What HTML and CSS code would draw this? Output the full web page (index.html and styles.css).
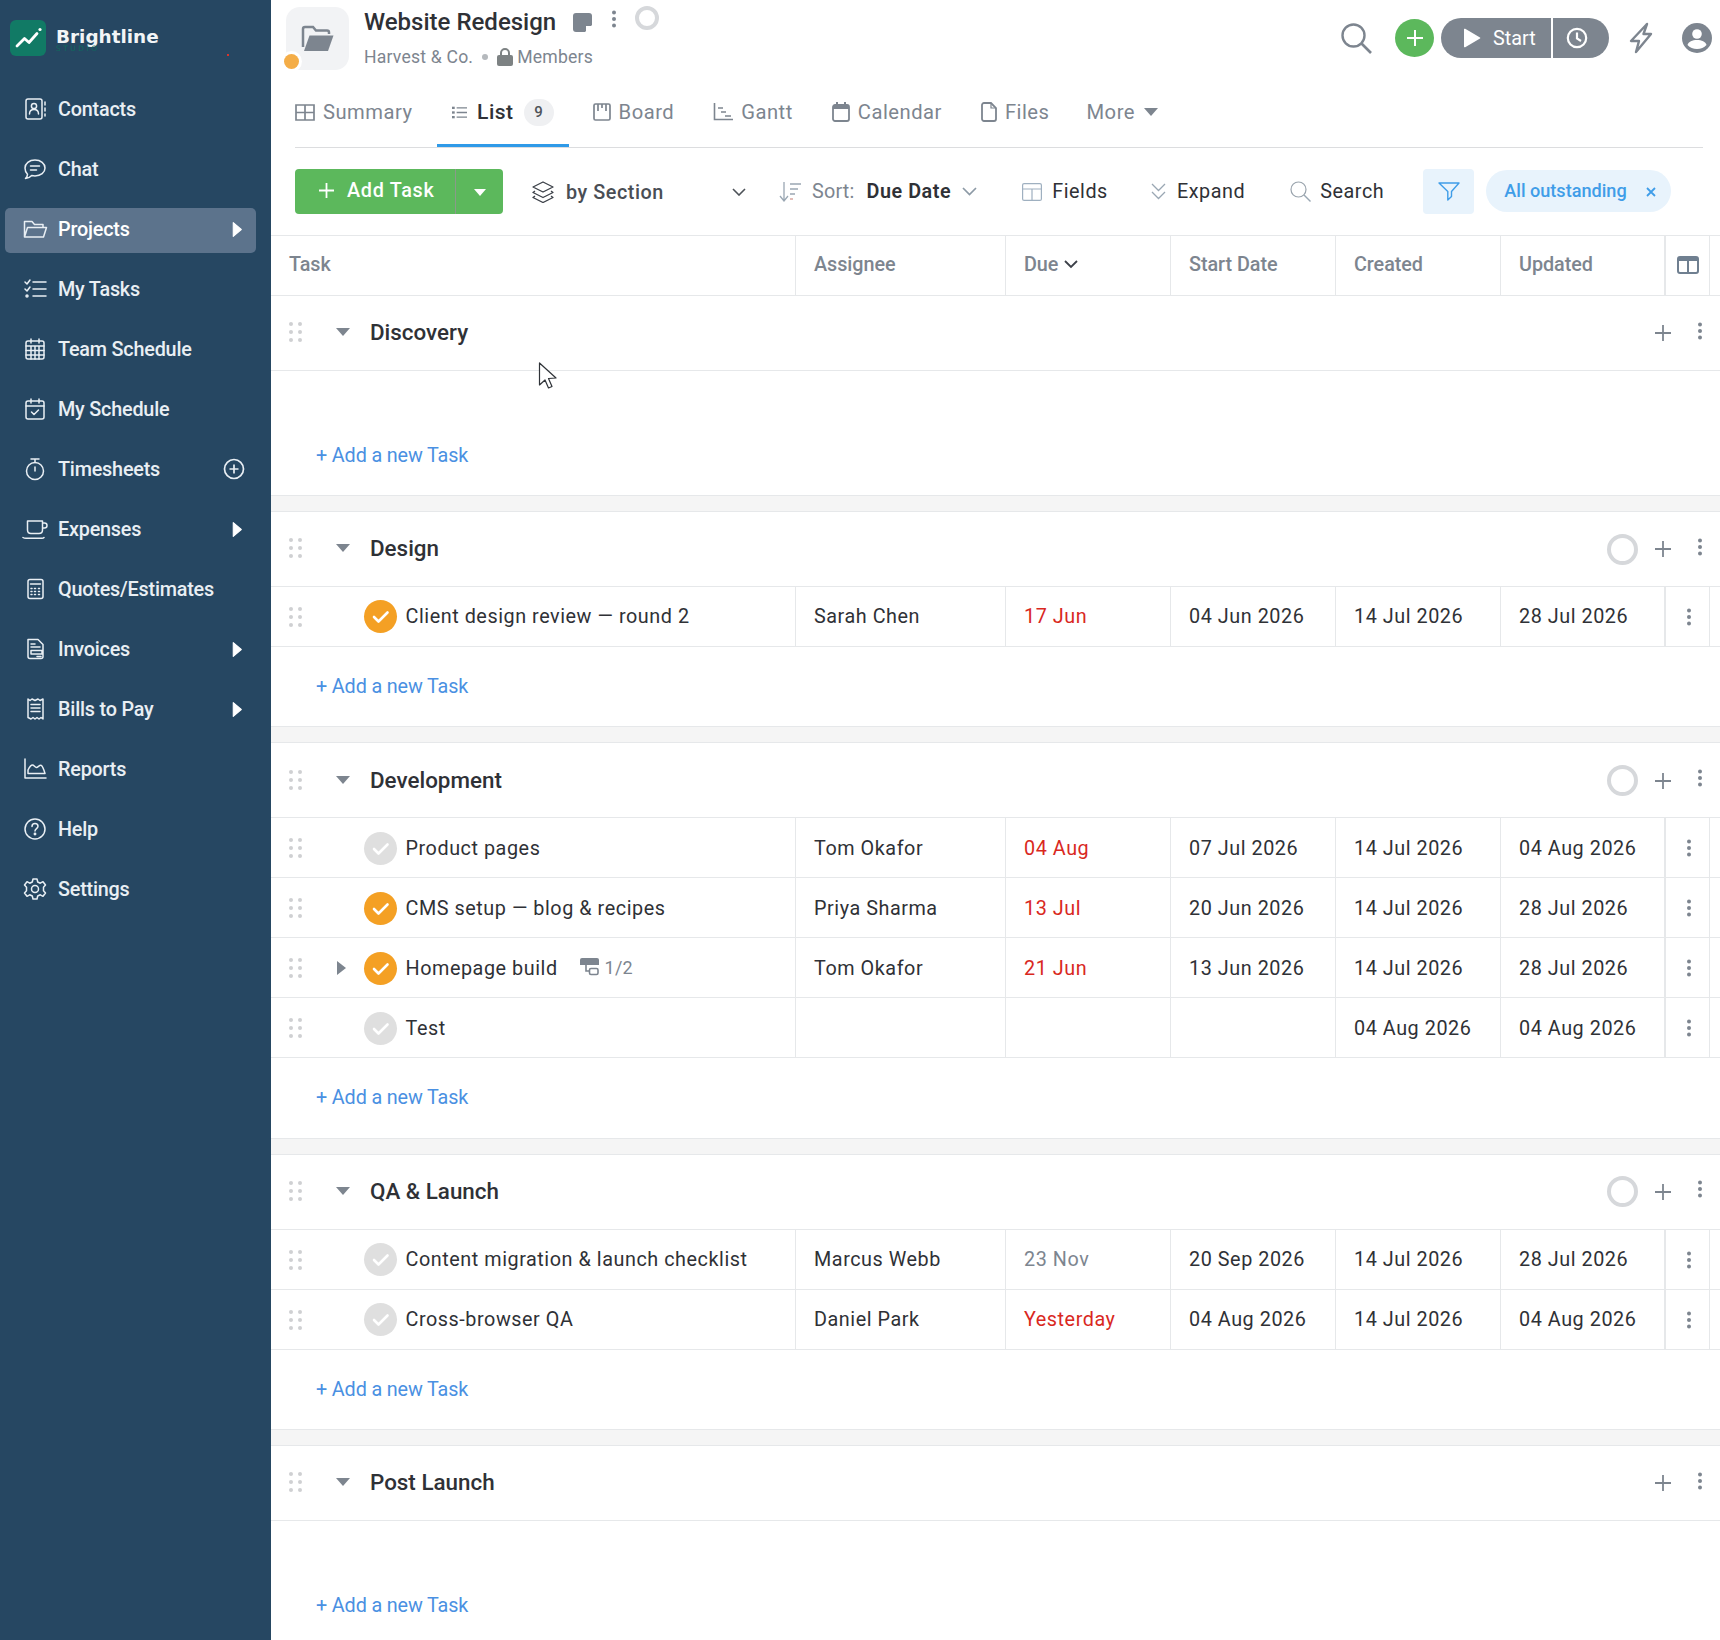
FILE: index.html
```html
<!DOCTYPE html>
<html lang="en">
<head>
<meta charset="utf-8">
<title>Website Redesign</title>
<link rel="stylesheet" href="styles.css">
</head>
<body>
<svg class="defs" width="0" height="0" aria-hidden="true">
  <symbol id="i-drag" viewBox="0 0 13 20"><g fill="#cfd0d2"><circle cx="2" cy="2" r="2"/><circle cx="11" cy="2" r="2"/><circle cx="2" cy="10" r="2"/><circle cx="11" cy="10" r="2"/><circle cx="2" cy="18" r="2"/><circle cx="11" cy="18" r="2"/></g></symbol>
  <symbol id="i-caret" viewBox="0 0 14 8"><path d="M0 0h14L7 8z" fill="#7d858f"/></symbol>
  <symbol id="i-check" viewBox="0 0 33 33"><path d="M10 17l4.5 4.5L23.5 12.500" fill="none" stroke="#fff" stroke-width="2.600" stroke-linecap="round" stroke-linejoin="round"/></symbol>
  <symbol id="i-plus" viewBox="0 0 18 18"><path d="M9 1v16M1 9h16" fill="none" stroke="#7d858f" stroke-width="1.800"/></symbol>
  <symbol id="i-dots" viewBox="0 0 6 18"><g fill="#7d858f"><circle cx="3" cy="2.500" r="2"/><circle cx="3" cy="9" r="2"/><circle cx="3" cy="15.500" r="2"/></g></symbol>
  <symbol id="i-arrow" viewBox="0 0 9 14"><path d="M1 0.500l7.500 6.500L1 13.500z" fill="#fff" stroke="#fff" stroke-linejoin="round"/></symbol>
</svg>

<div class="app">
  <aside class="sidebar">
    <div class="brand">
      <span class="brand-logo">
        <svg width="36" height="36" viewBox="0 0 36 36"><path d="M7 26l7.500-7.500 4.500 4 8-9" fill="none" stroke="#fff" stroke-width="2.800" stroke-linecap="round" stroke-linejoin="round"/><circle cx="30" cy="9.500" r="1.600" fill="#fff"/></svg>
      </span>
      <span class="brand-text">Brightline<small>STUDIO</small></span>
      <i class="red-speck"></i>
    </div>
    <nav class="nav">
      <a class="nav-item"><svg class="nav-icon" viewBox="0 0 26 26"><rect x="4" y="3" width="16" height="20" rx="2"/><circle cx="12" cy="10" r="2.600"/><path d="M7.500 18c0-3 2-4.500 4.500-4.500s4.500 1.500 4.500 4.500M23 6v3M23 12v3M23 18v2"/></svg>Contacts</a>
      <a class="nav-item"><svg class="nav-icon" viewBox="0 0 26 26"><path d="M13 4c5.800 0 10 3.500 10 8s-4.200 8-10 8c-1.200 0-2.300-.2-3.300-.4C8 21.500 6 22.500 3.500 22.500c1.300-1.200 2-2.600 2-4.300C3.900 16.700 3 14.500 3 12c0-4.500 4.200-8 10-8zM8.500 10h9M8.500 14h6"/></svg>Chat</a>
      <a class="nav-item active"><svg class="nav-icon" viewBox="0 0 26 26"><path d="M2.500 21V5.500h7.500l2.500 3H21v3M2.500 21l3-9.500h19L21.500 21z"/></svg>Projects<svg class="nav-arrow"><use href="#i-arrow"/></svg></a>
      <a class="nav-item"><svg class="nav-icon" viewBox="0 0 26 26"><path d="M3 6l2 2 3-4M3 13l2 2 3-4M11 6h13M11 13h13M11 20h13"/><circle cx="5" cy="20" r="1"/></svg>My Tasks</a>
      <a class="nav-item"><svg class="nav-icon" viewBox="0 0 26 26"><rect x="4" y="5" width="18" height="18" rx="2"/><path d="M4 10h18M4 14.500h18M4 19h18M9 10v13M13 10v13M17 10v13M9 3v4M17 3v4"/></svg>Team Schedule</a>
      <a class="nav-item"><svg class="nav-icon" viewBox="0 0 26 26"><rect x="4" y="5" width="18" height="18" rx="2"/><path d="M4 10h18M9 3v4M17 3v4M9.500 16l2.500 2.500 4.500-4.500"/></svg>My Schedule</a>
      <a class="nav-item"><svg class="nav-icon" viewBox="0 0 26 26"><circle cx="13" cy="15" r="8.500"/><path d="M9 3h8M13 3v3.500M13 11v4"/></svg>Timesheets<svg class="nav-plus" viewBox="0 0 22 22"><circle cx="11" cy="11" r="9.500"/><path d="M11 6.500v9M6.500 11h9"/></svg></a>
      <a class="nav-item"><svg class="nav-icon" viewBox="0 0 26 26"><path d="M5.500 5h15v9c0 2-1.500 3.500-3.500 3.500H9c-2 0-3.500-1.500-3.500-3.500zM20.500 7h2c1.500 0 2.500 1 2.500 2.500S24 12 22.500 12h-2M1 21.500c1 .7 2 .8 3 .8h16c1 0 1.500-.2 2-.8"/></svg>Expenses<svg class="nav-arrow"><use href="#i-arrow"/></svg></a>
      <a class="nav-item"><svg class="nav-icon" viewBox="0 0 26 26"><rect x="6" y="3.500" width="15" height="19" rx="2"/><path d="M8.500 8h10M9 12.500h1M12.500 12.500h1M16.500 12.500h1M9 15.500h1M12.500 15.500h1M16.500 15.500h1M9 18.500h1M12.500 18.500h1M16.500 18.500h1"/></svg>Quotes/Estimates</a>
      <a class="nav-item"><svg class="nav-icon" viewBox="0 0 26 26"><path d="M6 3.500h10l5 5v12c0 1-.8 2-2 2H8c-1.200 0-2-1-2-2zM9 8h4M9 11h9M9 14.500h11v3.500H9zM15 20.500h4"/></svg>Invoices<svg class="nav-arrow"><use href="#i-arrow"/></svg></a>
      <a class="nav-item"><svg class="nav-icon" viewBox="0 0 26 26"><path d="M6 3l2 1.500L10 3l3 1.500L16 3l2 1.500L21 3v20l-2-1.500-2 1.500-2-1.500-2 1.500-2-1.500-2 1.500-3-1.500zM9 8.500h9M9 12h9M9 15.500h9"/></svg>Bills to Pay<svg class="nav-arrow"><use href="#i-arrow"/></svg></a>
      <a class="nav-item"><svg class="nav-icon" viewBox="0 0 26 26"><path d="M3 3v19h21M6 17.500V14c1.500-3 3-5 4.500-5s2.500 2.500 4 2.500S18 8 19.500 9.500 22 14 23 17.500z"/></svg>Reports</a>
      <a class="nav-item"><svg class="nav-icon" viewBox="0 0 26 26"><circle cx="13" cy="13" r="10"/><path d="M10 10.500c0-1.800 1.400-3 3-3s3 1.200 3 2.800c0 2.200-3 2.500-3 4.700"/><circle cx="13" cy="18" r=".7"/></svg>Help</a>
      <a class="nav-item"><svg class="nav-icon" viewBox="0 0 26 26"><circle cx="13" cy="13" r="3.500"/><path d="M11 3h4l.7 3 2.600 1.200 2.700-1.500 2.500 3.300-2 2.300v3.400l2 2.300-2.500 3.300-2.700-1.500-2.600 1.200-.7 3h-4l-.7-3-2.600-1.200-2.700 1.500L2.500 17l2-2.300v-3.400l-2-2.300L5 5.700l2.700 1.500L10.300 6z"/></svg>Settings</a>
    </nav>
  </aside>

  <main class="main">
    <header class="top">
      <div class="head-row">
        <div class="project-icon">
          <svg width="34" height="28" viewBox="0 0 34 28"><path d="M2 22V4c0-1.100.9-2 2-2h8l3 3.500h11c1.100 0 2 .9 2 2V9" fill="none" stroke="#7d858f" stroke-width="2.500"/><path d="M3 26L8.500 10.500h24L27 26z" fill="#7d858f"/></svg>
          <i class="project-badge"></i>
        </div>
        <div class="project-meta">
          <div class="project-title-row">
            <h1 class="project-title">Website Redesign</h1>
            <svg class="note-icon" width="19" height="19" viewBox="0 0 19 19"><path d="M3 0h13a3 3 0 0 1 3 3v9l-7 7H3a3 3 0 0 1-3-3V3a3 3 0 0 1 3-3z" fill="#7d858f"/><path d="M13 19v-6h6" fill="#fff"/></svg>
            <svg class="title-dots"><use href="#i-dots"/></svg>
            <i class="title-ring"></i>
          </div>
          <div class="project-sub">
            <span>Harvest &amp; Co.</span><i class="sub-dot"></i>
            <svg width="16" height="18" viewBox="0 0 16 18"><path d="M4 8V5a4 4 0 0 1 8 0v3" fill="none" stroke="#7d8283" stroke-width="2"/><rect y="7" width="16" height="11" rx="2" fill="#7d8283"/></svg>
            <span class="sub-members">Members</span>
          </div>
        </div>
        <div class="head-actions">
          <svg class="act-search" width="32" height="32" viewBox="0 0 32 32"><circle cx="13.500" cy="13.500" r="11" fill="none" stroke="#7d858f" stroke-width="2.400"/><path d="M21.500 21.500L31 31" stroke="#7d858f" stroke-width="2.600"/></svg>
          <span class="act-add"><svg width="18" height="18" viewBox="0 0 18 18"><path d="M9 1v16M1 9h16" stroke="#fff" stroke-width="2"/></svg></span>
          <span class="act-start"><svg width="18" height="20" viewBox="0 0 18 20"><path d="M1 1.500v17a.8.800 0 0 0 1.200.7L17 10.500a.6.600 0 0 0 0-1L2.200.8A.8.800 0 0 0 1 1.500z" fill="#fff"/></svg>Start</span>
          <span class="act-clock"><svg width="22" height="22" viewBox="0 0 22 22"><circle cx="11" cy="11" r="9.200" fill="none" stroke="#fff" stroke-width="2.200"/><path d="M11 5.500V11.500L15 14" fill="none" stroke="#fff" stroke-width="2.200"/></svg></span>
          <svg class="act-bolt" width="24" height="32" viewBox="0 0 24 32"><path d="M18 2L2 19h8l-3 11L22 12h-7.500z" fill="none" stroke="#7d858f" stroke-width="2.400" stroke-linejoin="round"/></svg>
          <svg class="act-user" width="30" height="30" viewBox="0 0 30 30"><circle cx="15" cy="15" r="15" fill="#7d858f"/><circle cx="15" cy="11" r="4.800" fill="#fff"/><path d="M5.500 22c1-3.500 4.800-5 9.500-5s8.500 1.500 9.500 5c-2.300 2.500-5.700 4-9.500 4s-7.200-1.500-9.500-4z" fill="#fff"/></svg>
        </div>
      </div>
      <nav class="tabs">
        <a class="tab"><svg width="20" height="17" viewBox="0 0 20 17"><path d="M1 1h18v15H1zM1 8.500h18M10 1v15" fill="none" stroke="#7d858f" stroke-width="1.700"/></svg>Summary</a>
        <a class="tab tab-active"><svg width="20" height="17" viewBox="0 0 20 17"><g fill="#7d858f"><rect y="1" width="3.500" height="3"/><rect y="7" width="3.500" height="3"/><rect y="13" width="3.500" height="3"/></g><path d="M6 2.500h14M6 8.500h14M6 14.500h14" stroke="#7d858f" stroke-width="1.700"/></svg>List<span class="count">9</span></a>
        <a class="tab"><svg width="18" height="18" viewBox="0 0 18 18"><rect x="1" y="1" width="16" height="16" rx="1.500" fill="none" stroke="#7d858f" stroke-width="1.700"/><path d="M5 1v7M9 1v4M13 1v7" stroke="#7d858f" stroke-width="1.700"/></svg>Board</a>
        <a class="tab"><svg width="20" height="18" viewBox="0 0 20 18"><path d="M1.500 0v16.500H20M5 5h5M8 9h5M12 13h6" fill="none" stroke="#7d858f" stroke-width="1.600"/></svg>Gantt</a>
        <a class="tab"><svg width="18" height="20" viewBox="0 0 18 20"><rect x="1" y="3" width="16" height="16" rx="2" fill="none" stroke="#7d858f" stroke-width="1.800"/><path d="M1 3h16v4H1z" fill="#7d858f"/><path d="M5 0v4M13 0v4" stroke="#7d858f" stroke-width="2"/></svg>Calendar</a>
        <a class="tab"><svg width="16" height="20" viewBox="0 0 16 20"><path d="M3 1h7l5 5v11a2 2 0 0 1-2 2H3a2 2 0 0 1-2-2V3a2 2 0 0 1 2-2z" fill="none" stroke="#7d858f" stroke-width="1.800"/><path d="M10 1v5h5" fill="none" stroke="#7d858f" stroke-width="1.200"/></svg>Files</a>
        <a class="tab tab-more">More<svg width="14" height="8"><use href="#i-caret"/></svg></a>
      </nav>
    </header>

    <div class="toolbar">
      <div class="add-btn">
        <span class="add-main"><svg width="15" height="15" viewBox="0 0 15 15"><path d="M7.500 0v15M0 7.500h15" stroke="#fff" stroke-width="1.800"/></svg>Add Task</span>
        <span class="add-drop"><svg width="12" height="7" viewBox="0 0 14 8"><path d="M0 0h14L7 8z" fill="#fff"/></svg></span>
      </div>
      <div class="tool tool-group">
        <svg width="22" height="22" viewBox="0 0 22 22"><path d="M11 1l10 5-10 5L1 6zM3 10l-2 1.500 10 5 10-5L19 10M3 15l-2 1.500 10 5 10-5L19 15" fill="none" stroke="#3c4048" stroke-width="1.300" stroke-linejoin="round"/></svg>
        <span class="group-label">by Section</span>
        <svg class="chev" width="14" height="8" viewBox="0 0 14 8"><path d="M1 1l6 6 6-6" fill="none" stroke="#4d5258" stroke-width="1.600"/></svg>
      </div>
      <div class="tool tool-sort">
        <svg width="22" height="20" viewBox="0 0 22 20"><path d="M5 0v18M1 14l4 5 4-5" fill="none" stroke="#9aa7b3" stroke-width="1.300"/><path d="M11 2h11M11 7h8M11 12h5" stroke="#9aa7b3" stroke-width="1.500"/><path d="M11 17h3" stroke="#d8a7a0" stroke-width="1.500"/></svg>
        <span class="sort-label">Sort:</span><b class="sort-value">Due Date</b>
        <svg class="chev" width="15" height="9" viewBox="0 0 15 9"><path d="M1 1l6.500 6.500L14 1" fill="none" stroke="#8d9aa6" stroke-width="1.700"/></svg>
      </div>
      <div class="tool tool-fields">
        <svg width="20" height="18" viewBox="0 0 20 18"><rect x=".6" y=".6" width="18.800" height="16.800" rx="1.500" fill="none" stroke="#9fb0c0" stroke-width="1.200"/><path d="M.6 6h18.800M10 6v11.400" stroke="#9fb0c0" stroke-width="1.200"/></svg>Fields
      </div>
      <div class="tool tool-expand">
        <svg width="15" height="18" viewBox="0 0 15 18"><path d="M1 1l6.500 6.500L14 1M1 9l6.500 6.500L14 9" fill="none" stroke="#9aa7b3" stroke-width="1.300"/></svg>Expand
      </div>
      <div class="tool tool-search">
        <svg width="21" height="21" viewBox="0 0 21 21"><circle cx="8.500" cy="8.500" r="7.500" fill="none" stroke="#9aa4ad" stroke-width="1.200"/><path d="M14 14l6.500 6.500" stroke="#9aa7b3" stroke-width="1.400"/></svg>Search
      </div>
      <div class="filter-btn"><svg width="22" height="19" viewBox="0 0 22 19"><path d="M1 1h20l-7.500 8.500v5L9.800 18V9.500z" fill="none" stroke="#3f9de8" stroke-width="1.400" stroke-linejoin="round"/></svg></div>
      <div class="filter-pill">All outstanding<svg width="10" height="10" viewBox="0 0 10 10"><path d="M1 1l8 8M9 1l-8 8" stroke="#3f9de8" stroke-width="1.800"/></svg></div>
    </div>

    <div class="grid-row grid-head">
      <div class="cell">Task</div>
      <div class="cell">Assignee</div>
      <div class="cell">Due<svg class="due-chev" width="14" height="9" viewBox="0 0 14 9"><path d="M1 1l6 6 6-6" fill="none" stroke="#3c4048" stroke-width="1.800"/></svg></div>
      <div class="cell">Start Date</div>
      <div class="cell">Created</div>
      <div class="cell cell-updated">Updated</div>
      <div class="cell cell-cols"><svg width="22" height="18" viewBox="0 0 22 18"><rect x="1" y="1" width="20" height="16" rx="2" fill="none" stroke="#6f7f90" stroke-width="2"/><path d="M1 2h20v3H1z" fill="#6f7f90"/><path d="M11 2v15" stroke="#6f7f90" stroke-width="2"/></svg></div>
      <div class="cell"></div>
    </div>

    <section class="section">
      <div class="sec-head"><svg class="drag"><use href="#i-drag"/></svg><span class="sec-caret"><svg width="14" height="8"><use href="#i-caret"/></svg></span><h2 class="sec-title">Discovery</h2><div class="sec-actions"><svg class="sec-plus"><use href="#i-plus"/></svg><svg class="sec-dots"><use href="#i-dots"/></svg></div></div>
      <div class="empty-space"></div>
      <div class="add-row">+ Add a new Task</div>
    </section>
    <div class="gap"></div>

    <section class="section">
      <div class="sec-head"><svg class="drag"><use href="#i-drag"/></svg><span class="sec-caret"><svg width="14" height="8"><use href="#i-caret"/></svg></span><h2 class="sec-title">Design</h2><div class="sec-actions"><i class="sec-ring"></i><svg class="sec-plus"><use href="#i-plus"/></svg><svg class="sec-dots"><use href="#i-dots"/></svg></div></div>
      <div class="grid-row task">
        <div class="cell cell-task"><svg class="drag"><use href="#i-drag"/></svg><span class="exp"></span><svg class="check on"><use href="#i-check"/></svg>Client design review — round 2</div>
        <div class="cell">Sarah Chen</div><div class="cell late">17 Jun</div><div class="cell">04 Jun 2026</div><div class="cell">14 Jul 2026</div><div class="cell cell-updated">28 Jul 2026</div><div class="cell cell-more"><svg class="row-dots"><use href="#i-dots"/></svg></div><div class="cell"></div>
      </div>
      <div class="add-row">+ Add a new Task</div>
    </section>
    <div class="gap"></div>

    <section class="section">
      <div class="sec-head"><svg class="drag"><use href="#i-drag"/></svg><span class="sec-caret"><svg width="14" height="8"><use href="#i-caret"/></svg></span><h2 class="sec-title">Development</h2><div class="sec-actions"><i class="sec-ring"></i><svg class="sec-plus"><use href="#i-plus"/></svg><svg class="sec-dots"><use href="#i-dots"/></svg></div></div>
      <div class="grid-row task">
        <div class="cell cell-task"><svg class="drag"><use href="#i-drag"/></svg><span class="exp"></span><svg class="check"><use href="#i-check"/></svg>Product pages</div>
        <div class="cell">Tom Okafor</div><div class="cell late">04 Aug</div><div class="cell">07 Jul 2026</div><div class="cell">14 Jul 2026</div><div class="cell cell-updated">04 Aug 2026</div><div class="cell cell-more"><svg class="row-dots"><use href="#i-dots"/></svg></div><div class="cell"></div>
      </div>
      <div class="grid-row task">
        <div class="cell cell-task"><svg class="drag"><use href="#i-drag"/></svg><span class="exp"></span><svg class="check on"><use href="#i-check"/></svg>CMS setup — blog &amp; recipes</div>
        <div class="cell">Priya Sharma</div><div class="cell late">13 Jul</div><div class="cell">20 Jun 2026</div><div class="cell">14 Jul 2026</div><div class="cell cell-updated">28 Jul 2026</div><div class="cell cell-more"><svg class="row-dots"><use href="#i-dots"/></svg></div><div class="cell"></div>
      </div>
      <div class="grid-row task">
        <div class="cell cell-task"><svg class="drag"><use href="#i-drag"/></svg><span class="exp"><svg class="exp-arrow" viewBox="0 0 9 14"><path d="M0 0l9 7-9 7z" fill="#7d858f"/></svg></span><svg class="check on"><use href="#i-check"/></svg>Homepage build<span class="subtasks"><svg width="20" height="18" viewBox="0 0 20 18"><path d="M1 2a2 2 0 0 1 2-2h15a2 2 0 0 1 2 2v5H1z" fill="#7d858f"/><path d="M7 7v6h3" fill="none" stroke="#7d858f" stroke-width="1.600"/><rect x="10.500" y="10.500" width="8.500" height="6" rx="1.500" fill="none" stroke="#7d858f" stroke-width="1.600"/></svg>1/2</span></div>
        <div class="cell">Tom Okafor</div><div class="cell late">21 Jun</div><div class="cell">13 Jun 2026</div><div class="cell">14 Jul 2026</div><div class="cell cell-updated">28 Jul 2026</div><div class="cell cell-more"><svg class="row-dots"><use href="#i-dots"/></svg></div><div class="cell"></div>
      </div>
      <div class="grid-row task">
        <div class="cell cell-task"><svg class="drag"><use href="#i-drag"/></svg><span class="exp"></span><svg class="check"><use href="#i-check"/></svg>Test</div>
        <div class="cell"></div><div class="cell"></div><div class="cell"></div><div class="cell">04 Aug 2026</div><div class="cell cell-updated">04 Aug 2026</div><div class="cell cell-more"><svg class="row-dots"><use href="#i-dots"/></svg></div><div class="cell"></div>
      </div>
      <div class="add-row">+ Add a new Task</div>
    </section>
    <div class="gap"></div>

    <section class="section">
      <div class="sec-head"><svg class="drag"><use href="#i-drag"/></svg><span class="sec-caret"><svg width="14" height="8"><use href="#i-caret"/></svg></span><h2 class="sec-title">QA &amp; Launch</h2><div class="sec-actions"><i class="sec-ring"></i><svg class="sec-plus"><use href="#i-plus"/></svg><svg class="sec-dots"><use href="#i-dots"/></svg></div></div>
      <div class="grid-row task">
        <div class="cell cell-task"><svg class="drag"><use href="#i-drag"/></svg><span class="exp"></span><svg class="check"><use href="#i-check"/></svg>Content migration &amp; launch checklist</div>
        <div class="cell">Marcus Webb</div><div class="cell muted">23 Nov</div><div class="cell">20 Sep 2026</div><div class="cell">14 Jul 2026</div><div class="cell cell-updated">28 Jul 2026</div><div class="cell cell-more"><svg class="row-dots"><use href="#i-dots"/></svg></div><div class="cell"></div>
      </div>
      <div class="grid-row task">
        <div class="cell cell-task"><svg class="drag"><use href="#i-drag"/></svg><span class="exp"></span><svg class="check"><use href="#i-check"/></svg>Cross-browser QA</div>
        <div class="cell">Daniel Park</div><div class="cell late">Yesterday</div><div class="cell">04 Aug 2026</div><div class="cell">14 Jul 2026</div><div class="cell cell-updated">04 Aug 2026</div><div class="cell cell-more"><svg class="row-dots"><use href="#i-dots"/></svg></div><div class="cell"></div>
      </div>
      <div class="add-row">+ Add a new Task</div>
    </section>
    <div class="gap"></div>

    <section class="section">
      <div class="sec-head"><svg class="drag"><use href="#i-drag"/></svg><span class="sec-caret"><svg width="14" height="8"><use href="#i-caret"/></svg></span><h2 class="sec-title">Post Launch</h2><div class="sec-actions"><svg class="sec-plus"><use href="#i-plus"/></svg><svg class="sec-dots"><use href="#i-dots"/></svg></div></div>
      <div class="empty-space"></div>
      <div class="add-row">+ Add a new Task</div>
    </section>

    <svg class="cursor" width="20" height="28" viewBox="0 0 20 28"><path d="M1.500 1v22l5.500-5 3.500 8 3.500-1.500-3.500-8 7.500-.5z" fill="#fff" stroke="#2f3338" stroke-width="1.200" stroke-linejoin="round"/></svg>
  </main>
</div>
</body>
</html>
```

FILE: styles.css
```css
* { box-sizing: border-box; }
html, body { margin: 0; padding: 0; }
body {
  width: 1720px;
  height: 1640px;
  overflow: hidden;
  background: #fff;
  font-family: Roboto, "Liberation Sans", sans-serif;
  color: #2f3136;
}
.defs { position: absolute; }
.app { display: flex; height: 1640px; }

/* Sidebar */
.sidebar {
  width: 271px;
  flex: none;
  background: #264762;
  position: relative;
}
.brand {
  height: 88px;
  padding: 20px 0 0 10px;
  display: flex;
  align-items: flex-start;
  gap: 10px;
}
.brand-logo {
  width: 36px;
  height: 36px;
  border-radius: 6px;
  background: #117a65;
  display: block;
}
.brand-logo svg { display: block; }
.brand-text {
  display: block;
  font-family: "DejaVu Sans", sans-serif;
  font-weight: 700;
  font-size: 18.400px;
  line-height: 20px;
  color: #f2f5f7;
  margin-top: 7px;
  position: relative;
}
.brand-text small {
  position: absolute;
  left: 0;
  top: 18px;
  font-size: 7.500px;
  font-weight: 400;
  line-height: 8px;
  letter-spacing: 2.500px;
  color: #0f6a5e;
}
.red-speck {
  position: absolute;
  left: 227px;
  top: 54px;
  width: 2px;
  height: 2px;
  background: #d9342b;
}
.nav { display: flex; flex-direction: column; gap: 15px; padding: 0 15px 0 5px; }
.nav-item {
  height: 45px;
  padding: 0 15px 3px 17px;
  border-radius: 5px;
  display: flex;
  align-items: center;
  gap: 10px;
  font-size: 19.800px;
  font-weight: 500;
  color: #e9eff4;
  letter-spacing: -0.2px;
}
.nav-item.active { background: #5c738c; color: #fff; }
.nav-icon {
  width: 26px;
  height: 26px;
  flex: none;
  fill: none;
  stroke: #e9eff4;
  stroke-width: 1.500;
  stroke-linecap: round;
  stroke-linejoin: round;
}
.nav-arrow { width: 10px; height: 15px; margin-left: auto; margin-right: -1px; }
.nav-plus {
  width: 22px;
  height: 22px;
  margin-left: auto;
  margin-right: -4px;
  fill: none;
  stroke: #e9eff4;
  stroke-width: 1.700;
}

/* Main */
.main { flex: 1; min-width: 0; position: relative; }
.top { height: 148px; padding-left: 15px; }
.head-row { height: 78px; display: flex; align-items: flex-start; }
.project-icon {
  width: 63px;
  height: 63px;
  margin-top: 7px;
  background: #f2f3f5;
  border-radius: 14px;
  display: flex;
  align-items: center;
  justify-content: center;
  position: relative;
  flex: none;
}
.project-badge {
  position: absolute;
  left: -2px;
  bottom: 1px;
  width: 15px;
  height: 15px;
  border-radius: 50%;
  background: #f4ad47;
  box-shadow: 0 0 0 3px #fff;
}
.project-meta { margin-left: 15px; }
.project-title-row { display: flex; align-items: center; height: 36px; margin-top: 4px; }
.project-title { margin: 0; font-size: 24px; font-weight: 500; line-height: 36px; color: #2f3136; }
.note-icon { margin-left: 17px; }
.title-dots { width: 6px; height: 18px; margin-left: 19px; margin-top: -6px; }
.title-ring {
  width: 24px;
  height: 24px;
  margin-left: 18px;
  margin-top: -9px;
  border-radius: 50%;
  border: 4.500px solid #d6d8db;
}
.project-sub {
  display: flex;
  align-items: center;
  height: 24px;
  margin-top: 5px;
  font-size: 17.600px;
  letter-spacing: 0.2px;
  color: #7d858f;
}
.sub-dot { width: 6px; height: 6px; margin: 0 9px 0 9px; border-radius: 50%; background: #b5b9bd; }
.sub-members { margin-left: 4px; }
.head-actions {
  margin-left: auto;
  display: flex;
  align-items: center;
  height: 40px;
  margin-top: 18px;
  padding-right: 8px;
}
.act-add {
  width: 39px;
  height: 38px;
  margin-left: 23px;
  border-radius: 50%;
  background: #5cb85c;
  display: flex;
  align-items: center;
  justify-content: center;
}
.act-start {
  width: 110px;
  height: 40px;
  margin-left: 7px;
  padding-left: 22px;
  border-radius: 20px 0 0 20px;
  background: #7d858f;
  color: #fff;
  display: flex;
  align-items: center;
  gap: 12px;
  font-size: 19.800px;
}
.act-clock {
  width: 56px;
  height: 40px;
  margin-left: 2px;
  padding-left: 13px;
  border-radius: 0 20px 20px 0;
  background: #7d858f;
  display: flex;
  align-items: center;
}
.act-bolt { margin-left: 20px; }
.act-user { margin-left: 29px; }

.tabs {
  height: 70px;
  margin: 0 17px 0 9px;
  padding: 0;
  display: flex;
  align-items: stretch;
  border-bottom: 1px solid #dcdddf;
}
.tab {
  display: flex;
  align-items: center;
  gap: 8px;
  padding: 0 20px 1px 0;
  margin-right: 19px;
  font-size: 20.200px;
  letter-spacing: 0.5px;
  color: #7d858f;
  position: relative;
  height: 69px;
}
.tab-active {
  color: #2f3136;
  font-weight: 500;
  font-size: 21px;
  padding: 0 15px 1px 15px;
  gap: 10px;
  margin-left: -15px;
  margin-right: 24px;
  width: 132px;
}
.tab-active::after {
  content: "";
  position: absolute;
  left: 0;
  right: 0;
  bottom: 0;
  height: 3px;
  background: #2f9ae8;
}
.count {
  width: 30px;
  height: 27px;
  margin-left: 0;
  flex: none;
  border-radius: 14px;
  background: #eff0f2;
  color: #4e5359;
  font-size: 15px;
  letter-spacing: 0;
  display: flex;
  align-items: center;
  justify-content: center;
}
.tab-more { gap: 9px; margin-left: -2px; }

/* Toolbar */
.toolbar {
  height: 87px;
  padding: 21px 0 0 24px;
  display: flex;
  align-items: flex-start;
}
.add-btn { display: flex; height: 45px; width: 208px; border-radius: 4px; overflow: hidden; background: #5cb85c; color: #fff; }
.add-main {
  width: 161px;
  padding-left: 24px;
  display: flex;
  align-items: center;
  gap: 13px;
  font-size: 19.800px;
  letter-spacing: 0.7px;
  font-weight: 500;
  border-right: 1px solid #8a9a8a;
  padding-bottom: 2px;
}
.add-drop { flex: 1; display: flex; align-items: center; justify-content: center; padding-top: 2px; }
.tool { display: flex; align-items: center; height: 45px; font-size: 19.800px; letter-spacing: 0.55px; color: #2f3136; }
.tool-group { margin-left: 29px; width: 227px; color: #4a4e55; font-weight: 500; }
.group-label { margin-left: 12px; padding-top: 2px; }
.tool-group .chev { margin-left: auto; margin-right: 13px; }
.tool-sort { margin-left: 20px; }
.sort-label { color: #7d858f; margin-left: 11px; letter-spacing: 0.2px; }
.sort-value { margin-left: 12px; color: #2f3136; font-weight: 600; }
.tool-sort .chev { margin-left: 11px; }
.tool-fields { margin-left: 45px; gap: 10px; }
.tool-expand { margin-left: 43px; gap: 11px; }
.tool-search { margin-left: 45px; gap: 9px; }
.filter-btn {
  width: 51px;
  height: 45px;
  margin-left: 39px;
  border-radius: 4px;
  background: #e8f3fc;
  display: flex;
  align-items: center;
  justify-content: center;
}
.filter-pill {
  width: 185px;
  height: 42px;
  margin-left: 12px;
  margin-top: 1px;
  padding: 0 0 2px 18px;
  border-radius: 21px;
  background: #e8f3fc;
  color: #3f9de8;
  font-size: 18.100px;
  font-weight: 500;
  display: flex;
  align-items: center;
  gap: 19px;
}
.filter-pill svg { margin-top: 3px; }

/* Table */
.grid-row {
  display: grid;
  grid-template-columns: 525px 210px 165px 165px 165px 165px 44px 10px;
}
.cell {
  display: flex;
  align-items: center;
  min-width: 0;
  padding-left: 18px;
  border-right: 1px solid #e6e8ea;
  font-size: 19.800px;
  letter-spacing: 0.55px;
  white-space: nowrap;
}
.cell:last-child { border-right: 0; padding: 0; }
.cell-updated { border-right: 2px solid #e6e8ea; }
.grid-head {
  height: 61px;
  border-top: 1px solid #e6e8ea;
  border-bottom: 1px solid #e6e8ea;
}
.grid-head .cell { color: #7d858f; font-weight: 500; padding-bottom: 2px; letter-spacing: -0.05px; }
.cell-cols { padding-left: 11px !important; }
.due-chev { margin-left: 6px; }
.sec-head {
  height: 75px;
  padding: 0 0 1.400px 18px;
  display: flex;
  align-items: center;
  border-bottom: 1px solid #e6e8ea;
}
.drag { width: 13px; height: 20px; flex: none; }
.sec-caret { width: 68px; padding-left: 34px; display: flex; align-items: center; }
.sec-title { margin: 0; font-size: 22.400px; font-weight: 500; color: #2f3136; }
.sec-actions { margin-left: auto; display: flex; align-items: center; padding-right: 17px; }
.sec-ring { width: 31px; height: 31px; margin-right: 16px; border-radius: 50%; border: 4px solid #d6d8db; margin-top: 2px; }
.sec-plus { width: 18px; height: 18px; margin-top: 2px; }
.sec-dots { width: 6px; height: 18px; margin-left: 25px; margin-top: -3px; }
.task { height: 60px; border-bottom: 1px solid #e6e8ea; }
.task .cell { padding-top: 0.800px; }
.cell-task { padding-left: 18px; }
.exp { width: 62px; flex: none; padding-left: 35px; display: flex; align-items: center; }
.exp-arrow { width: 9px; height: 14px; }
.check { width: 33px; height: 33px; flex: none; margin-right: 8.500px; border-radius: 50%; background: #dfdfdf; }
.check.on { background: #f4a024; }
.subtasks { margin-left: 21px; display: flex; align-items: center; gap: 6px; color: #7d858f; font-size: 18px; margin-top: -2px; letter-spacing: 0.2px; }
.late { color: #d9281e; }
.muted { color: #7d858f; }
.cell-more { padding-left: 20px; }
.row-dots { width: 6px; height: 18px; }
.add-row {
  height: 79.330px;
  padding: 0 0 0.400px 45px;
  display: flex;
  align-items: center;
  font-size: 19.800px;
  letter-spacing: -0.14px;
  color: #4a90e2;
}
.empty-space { height: 44.670px; }
.gap {
  height: 17px;
  background: #f5f5f5;
  border-top: 1px solid #e6e8ea;
  border-bottom: 1px solid #e6e8ea;
}
.cursor { position: absolute; left: 267px; top: 362px; }
```
